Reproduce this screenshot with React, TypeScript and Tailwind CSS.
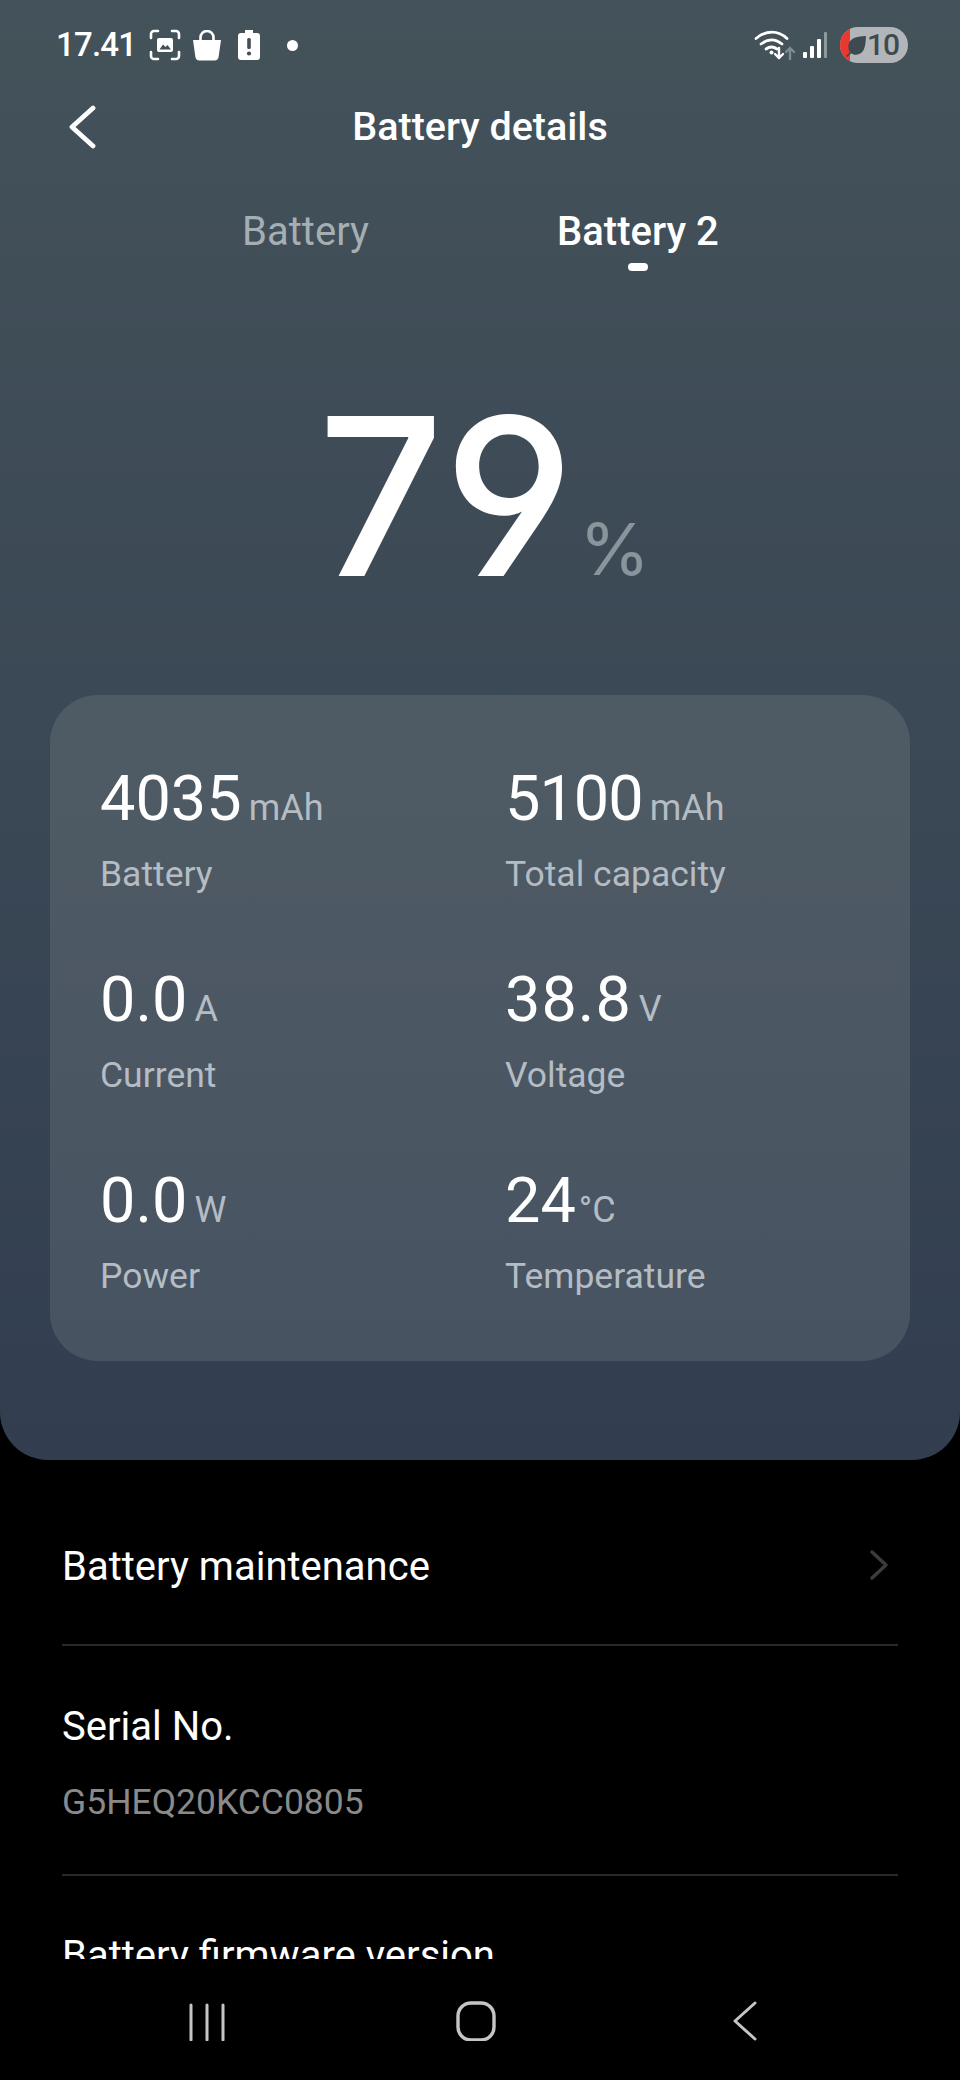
import React from 'react';

interface StatProps {
  value: string;
  unit: string;
  label: string;
  valueClass?: string;
  unitClass?: string;
}

const stats: StatProps[] = [
  { value: '4035', unit: 'mAh', label: 'Battery' },
  { value: '5100', unit: 'mAh', label: 'Total capacity', valueClass: 'tracking-[-1px]' },
  { value: '0.0', unit: 'A', label: 'Current' },
  { value: '38.8', unit: 'V', label: 'Voltage', valueClass: 'tracking-[1px]' },
  { value: '0.0', unit: 'W', label: 'Power' },
  { value: '24', unit: '°C', label: 'Temperature', unitClass: 'ml-[3px]' },
];

const Stat: React.FC<StatProps> = ({ value, unit, label, valueClass, unitClass }) => (
  <div className="h-[201px]">
    <div className="flex items-baseline h-[72px] leading-[72px]">
      <span className={`text-[63px] text-white ${valueClass ?? ''}`}>{value}</span>
      <span className={`text-[36px] text-[#b4bcc4] ${unitClass ?? 'ml-[7px]'}`}>{unit}</span>
    </div>
    <div className="text-[35.5px] leading-[44px] mt-[17px] text-[#b4bcc4]">{label}</div>
  </div>
);

const StatusLeft = () => (
  <div className="flex items-center">
    <span className="text-[33px] leading-[40px] font-medium tracking-[-0.8px] text-white w-[93px]">17.41</span>
    <svg width="32" height="32" viewBox="0 0 32 32" fill="none" stroke="#fff" strokeWidth="2.6" strokeLinecap="round">
      <path d="M2 9V5a3 3 0 0 1 3-3h4M23 2h4a3 3 0 0 1 3 3v4M30 23v4a3 3 0 0 1-3 3h-4M9 30H5a3 3 0 0 1-3-3v-4" />
      <rect x="8" y="9" width="16" height="14" rx="2" fill="#fff" stroke="none" />
      <path d="M10.5 20.5l3.5-5 2.5 2.5 2-2 3.5 4.5z" fill="#434f56" stroke="none" />
    </svg>
    <svg className="ml-[11px]" width="30" height="31" viewBox="0 0 30 31" fill="#fff">
      <path d="M1 10h28l-2.4 17a4 4 0 0 1-4 3.4H7.4a4 4 0 0 1-4-3.4z" />
      <path d="M8.5 11V7.5a6.5 6.5 0 0 1 13 0V11" fill="none" stroke="#fff" strokeWidth="2.6" />
    </svg>
    <svg className="ml-[16px]" width="22" height="30" viewBox="0 0 22 30">
      <path d="M7 0h8v3h4a3 3 0 0 1 3 3v21a3 3 0 0 1-3 3H3a3 3 0 0 1-3-3V6a3 3 0 0 1 3-3h4z" fill="#fff" />
      <rect x="9.2" y="8" width="3.6" height="11" rx="1.5" fill="#434f56" />
      <circle cx="11" cy="23.5" r="2.1" fill="#434f56" />
    </svg>
    <div className="ml-[27px] w-[11px] h-[11px] rounded-full bg-white" />
  </div>
);

const StatusRight = () => (
  <div className="flex items-center">
    <svg width="42" height="32" viewBox="0 0 42 32" fill="none" strokeLinecap="round">
      <path d="M2 9.5C12 1 24 1 33 9.5" stroke="#fff" strokeWidth="2.8" />
      <path d="M7 15c7-5.5 14-5.500 21 0" stroke="#fff" strokeWidth="2.8" />
      <path d="M12 20c3.500-2.500 7.500-2.500 11 0" stroke="#fff" strokeWidth="2.8" />
      <circle cx="17.500" cy="23.500" r="2" fill="#fff" />
      <path d="M25 19v10M21 25l4 4 4-4" stroke="#fff" strokeWidth="2.400" />
      <path d="M36 30V19M32 23l4-4 4 4" stroke="#7f8b91" strokeWidth="2.400" />
    </svg>
    <svg className="ml-[7px]" width="26" height="26" viewBox="0 0 26 26" fill="#fff">
      <rect x="0" y="20" width="4" height="6" rx="1" />
      <rect x="7" y="14" width="4" height="12" rx="1" />
      <rect x="14" y="7" width="4" height="19" rx="1" />
      <rect x="21" y="0" width="3" height="26" rx="1" fill="#8f989d" />
    </svg>
    <div className="relative ml-[11px] w-[68px] h-[36px] rounded-full bg-[#b3b6b8] overflow-hidden flex items-center justify-end pr-[9px]">
      <div className="absolute left-0 top-0 bottom-0 w-[10px] bg-[#e9392f]" />
      <svg className="absolute left-[5px] top-[8px]" width="22" height="22" viewBox="0 0 20 20" fill="#3f4a50">
        <path d="M19 1C9 1 3 4 3 11c0 2 .6 3.500 1.500 4.500L1 19l1 1 3.800-3.500C7 17.500 8.500 18 10 18c7 0 9-7 9-17z" />
      </svg>
      <span className="text-[30px] leading-none font-medium tracking-[-1px] text-[#3f4a50]">10</span>
    </div>
  </div>
);

const NavBar = () => (
  <div className="h-[121px] bg-black flex items-start pt-[44px]">
    <div className="w-[416px] flex justify-end">
      <svg className="mr-[190px]" width="38" height="38" viewBox="0 0 38 38" fill="none" stroke="#c5c5c5" strokeWidth="3" strokeLinecap="round">
        <path d="M3 2v35M19 2v35M35 2v35" />
      </svg>
    </div>
    <svg className="ml-[40px] -mt-[2px]" width="40" height="40" viewBox="0 0 40 40" fill="none" stroke="#c5c5c5" strokeWidth="3.400">
      <rect x="2" y="2" width="36" height="37" rx="13" />
    </svg>
    <svg className="ml-[236px] -mt-[2px]" width="26" height="40" viewBox="0 0 26 40" fill="none" stroke="#c5c5c5" strokeWidth="3" strokeLinecap="round" strokeLinejoin="round">
      <path d="M23 2L3 20l20 18" />
    </svg>
  </div>
);

export default function App() {
  return (
    <div className="w-[960px] h-[2080px] overflow-hidden bg-black font-['Roboto',sans-serif]">
      <div className="h-[1460px] rounded-b-[48px] bg-gradient-to-b from-[#44525a] to-[#323e50] pt-[25px]">
        <div className="flex items-center justify-between pl-[56px] pr-[52px] h-[40px]">
          <StatusLeft />
          <StatusRight />
        </div>
        <div className="relative flex items-center justify-center h-[64px] mt-[30px]">
          <svg className="absolute left-[67px] top-[10px]" width="30" height="44" viewBox="0 0 30 44" fill="none" stroke="#fff" strokeWidth="4.800" strokeLinecap="round" strokeLinejoin="round">
            <path d="M26 3L5 22l21 19" />
          </svg>
          <span className="text-[39.5px] font-medium text-white">Battery details</span>
        </div>
        <div className="flex mt-[48px] h-[80px]">
          <div className="w-[482px] flex justify-end pr-[113px]">
            <span className="text-[40px] leading-[50px] text-[#a5aeb3]">Battery</span>
          </div>
          <div className="flex flex-col items-center ml-[75px]">
            <span className="text-[40px] leading-[50px] font-medium text-white">Battery 2</span>
            <div className="w-[20px] h-[8px] rounded-full bg-white mt-[6px]" />
          </div>
        </div>
        <div className="flex items-baseline justify-center pl-[8px] h-[280px] mt-[69px] leading-[280px] font-['Inter',sans-serif] [font-feature-settings:'ss01','cv03','cv04']">
          <span className="text-[220px] font-medium text-white">79</span>
          <span className="text-[72px] text-[#8a949b] ml-[5px] -translate-y-[1px]">%</span>
        </div>
        <div className="mx-[50px] mt-[59px] h-[666px] rounded-[48px] bg-gradient-to-b from-[#4f5b64] to-[#485362] pl-[50px] pt-[68px] grid grid-cols-[405px_1fr] content-start">
          {stats.map(s => (
            <Stat key={s.label} {...s} />
          ))}
        </div>
      </div>
      <div className="h-[499px] overflow-hidden px-[62px]">
        <div className="h-[186px] pt-[60px] border-b-2 border-[#2a2a2a] flex justify-between items-start">
          <span className="text-[40px] leading-[94px] text-white">Battery maintenance</span>
          <svg className="mt-[29px] mr-[9px]" width="20" height="32" viewBox="0 0 20 32" fill="none" stroke="#3c3c40" strokeWidth="3.500" strokeLinecap="round" strokeLinejoin="round">
            <path d="M3 3l14 13L3 29" />
          </svg>
        </div>
        <div className="h-[230px] pt-[56px] border-b-2 border-[#2a2a2a]">
          <div className="text-[40px] leading-[50px] text-white">Serial No.</div>
          <div className="text-[35.5px] leading-[44px] mt-[28px] text-[#8a8a8a]">G5HEQ20KCC0805</div>
        </div>
        <div className="text-[40px] leading-[50px] text-white mt-[55px]">Battery firmware version</div>
      </div>
      <NavBar />
    </div>
  );
}
